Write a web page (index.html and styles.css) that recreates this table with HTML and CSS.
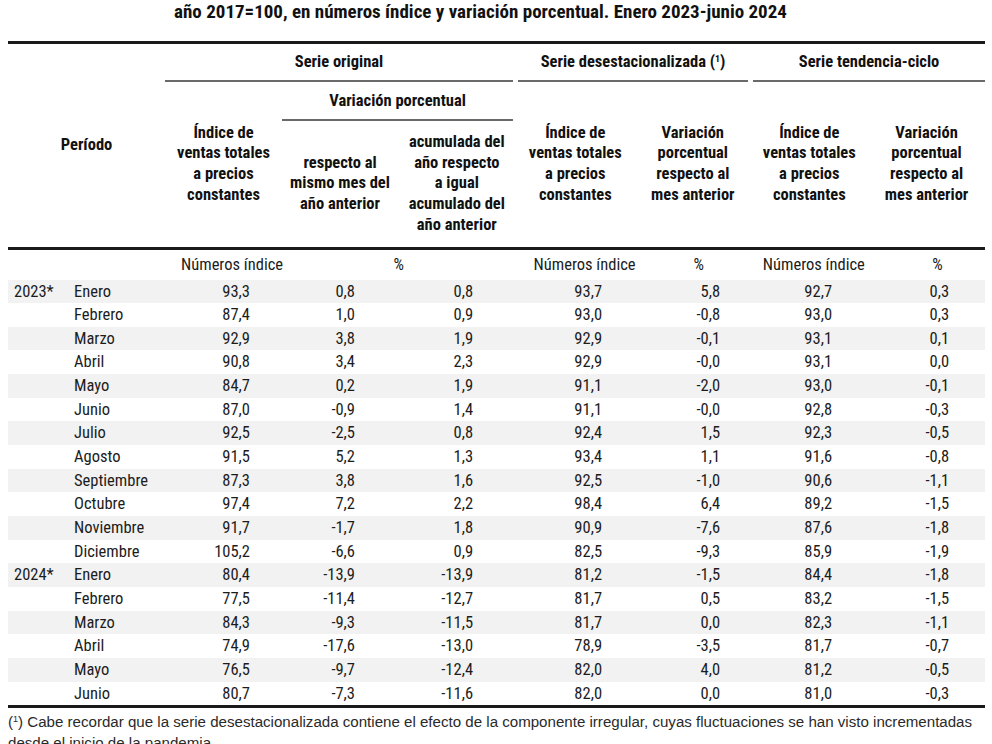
FILE: index.html
```html
<!DOCTYPE html>
<html lang="es">
<head>
<meta charset="utf-8">
<title>Índice de ventas</title>
<link rel="stylesheet" href="styles.css">
</head>
<body>
<div class="page">
  <h1 class="title">año 2017=100, en números índice y variación porcentual. Enero 2023-junio 2024</h1>
  <table class="tbl">
    <colgroup>
      <col class="w-year"><col class="w-month"><col class="w-c3"><col class="w-c4"><col class="w-c5"><col class="w-c6"><col class="w-c7"><col class="w-c8"><col class="w-c9">
    </colgroup>
    <thead>
      <tr class="h1">
        <th colspan="2" rowspan="3" class="periodo">Período</th>
        <th colspan="3" class="grp"><div class="ul ul-r">Serie original</div></th>
        <th colspan="2" class="grp"><div class="ul ul-lr">Serie desestacionalizada (<sup>1</sup>)</div></th>
        <th colspan="2" class="grp"><div class="ul ul-l">Serie tendencia-ciclo</div></th>
      </tr>
      <tr class="h2">
        <th rowspan="2" class="sub">Índice de<br>ventas totales<br>a precios<br>constantes</th>
        <th colspan="2" class="grp"><div class="ul ul-r">Variación porcentual</div></th>
        <th rowspan="2" class="sub">Índice de<br>ventas totales<br>a precios<br>constantes</th>
        <th rowspan="2" class="sub">Variación<br>porcentual<br>respecto al<br>mes anterior</th>
        <th rowspan="2" class="sub">Índice de<br>ventas totales<br>a precios<br>constantes</th>
        <th rowspan="2" class="sub">Variación<br>porcentual<br>respecto al<br>mes anterior</th>
      </tr>
      <tr class="h3">
        <th class="sub">respecto al<br>mismo mes del<br>año anterior</th>
        <th class="sub">acumulada del<br>año respecto<br>a igual<br>acumulado del<br>año anterior</th>
      </tr>
    </thead>
    <tbody>
      <tr class="units">
        <td colspan="2"></td>
        <td class="u3">Números índice</td>
        <td colspan="2" class="u45">%</td>
        <td class="u6">Números índice</td>
        <td class="u7">%</td>
        <td class="u8">Números índice</td>
        <td class="u9">%</td>
      </tr>
      <tr><td class="yr">2023*</td><td class="mo">Enero</td><td class="n3">93,3</td><td class="n4">0,8</td><td class="n5">0,8</td><td class="n6">93,7</td><td class="n7">5,8</td><td class="n8">92,7</td><td class="n9">0,3</td></tr>
      <tr><td class="yr"></td><td class="mo">Febrero</td><td class="n3">87,4</td><td class="n4">1,0</td><td class="n5">0,9</td><td class="n6">93,0</td><td class="n7">-0,8</td><td class="n8">93,0</td><td class="n9">0,3</td></tr>
      <tr><td class="yr"></td><td class="mo">Marzo</td><td class="n3">92,9</td><td class="n4">3,8</td><td class="n5">1,9</td><td class="n6">92,9</td><td class="n7">-0,1</td><td class="n8">93,1</td><td class="n9">0,1</td></tr>
      <tr><td class="yr"></td><td class="mo">Abril</td><td class="n3">90,8</td><td class="n4">3,4</td><td class="n5">2,3</td><td class="n6">92,9</td><td class="n7">-0,0</td><td class="n8">93,1</td><td class="n9">0,0</td></tr>
      <tr><td class="yr"></td><td class="mo">Mayo</td><td class="n3">84,7</td><td class="n4">0,2</td><td class="n5">1,9</td><td class="n6">91,1</td><td class="n7">-2,0</td><td class="n8">93,0</td><td class="n9">-0,1</td></tr>
      <tr><td class="yr"></td><td class="mo">Junio</td><td class="n3">87,0</td><td class="n4">-0,9</td><td class="n5">1,4</td><td class="n6">91,1</td><td class="n7">-0,0</td><td class="n8">92,8</td><td class="n9">-0,3</td></tr>
      <tr><td class="yr"></td><td class="mo">Julio</td><td class="n3">92,5</td><td class="n4">-2,5</td><td class="n5">0,8</td><td class="n6">92,4</td><td class="n7">1,5</td><td class="n8">92,3</td><td class="n9">-0,5</td></tr>
      <tr><td class="yr"></td><td class="mo">Agosto</td><td class="n3">91,5</td><td class="n4">5,2</td><td class="n5">1,3</td><td class="n6">93,4</td><td class="n7">1,1</td><td class="n8">91,6</td><td class="n9">-0,8</td></tr>
      <tr><td class="yr"></td><td class="mo">Septiembre</td><td class="n3">87,3</td><td class="n4">3,8</td><td class="n5">1,6</td><td class="n6">92,5</td><td class="n7">-1,0</td><td class="n8">90,6</td><td class="n9">-1,1</td></tr>
      <tr><td class="yr"></td><td class="mo">Octubre</td><td class="n3">97,4</td><td class="n4">7,2</td><td class="n5">2,2</td><td class="n6">98,4</td><td class="n7">6,4</td><td class="n8">89,2</td><td class="n9">-1,5</td></tr>
      <tr><td class="yr"></td><td class="mo">Noviembre</td><td class="n3">91,7</td><td class="n4">-1,7</td><td class="n5">1,8</td><td class="n6">90,9</td><td class="n7">-7,6</td><td class="n8">87,6</td><td class="n9">-1,8</td></tr>
      <tr><td class="yr"></td><td class="mo">Diciembre</td><td class="n3">105,2</td><td class="n4">-6,6</td><td class="n5">0,9</td><td class="n6">82,5</td><td class="n7">-9,3</td><td class="n8">85,9</td><td class="n9">-1,9</td></tr>
      <tr><td class="yr">2024*</td><td class="mo">Enero</td><td class="n3">80,4</td><td class="n4">-13,9</td><td class="n5">-13,9</td><td class="n6">81,2</td><td class="n7">-1,5</td><td class="n8">84,4</td><td class="n9">-1,8</td></tr>
      <tr><td class="yr"></td><td class="mo">Febrero</td><td class="n3">77,5</td><td class="n4">-11,4</td><td class="n5">-12,7</td><td class="n6">81,7</td><td class="n7">0,5</td><td class="n8">83,2</td><td class="n9">-1,5</td></tr>
      <tr><td class="yr"></td><td class="mo">Marzo</td><td class="n3">84,3</td><td class="n4">-9,3</td><td class="n5">-11,5</td><td class="n6">81,7</td><td class="n7">0,0</td><td class="n8">82,3</td><td class="n9">-1,1</td></tr>
      <tr><td class="yr"></td><td class="mo">Abril</td><td class="n3">74,9</td><td class="n4">-17,6</td><td class="n5">-13,0</td><td class="n6">78,9</td><td class="n7">-3,5</td><td class="n8">81,7</td><td class="n9">-0,7</td></tr>
      <tr><td class="yr"></td><td class="mo">Mayo</td><td class="n3">76,5</td><td class="n4">-9,7</td><td class="n5">-12,4</td><td class="n6">82,0</td><td class="n7">4,0</td><td class="n8">81,2</td><td class="n9">-0,5</td></tr>
      <tr><td class="yr"></td><td class="mo">Junio</td><td class="n3">80,7</td><td class="n4">-7,3</td><td class="n5">-11,6</td><td class="n6">82,0</td><td class="n7">0,0</td><td class="n8">81,0</td><td class="n9">-0,3</td></tr>
    </tbody>
  </table>
  <p class="note">(<sup>1</sup>) Cabe recordar que la serie desestacionalizada contiene el efecto de la componente irregular, cuyas fluctuaciones se han visto incrementadas desde el inicio de la pandemia.</p>
</div>
</body>
</html>
```

FILE: styles.css
```css
html, body {
  margin: 0;
  padding: 0;
  background: #ffffff;
}

.page {
  padding: 0 7px 0 8px;
  font-family: "Roboto", "Liberation Sans", sans-serif;
  font-stretch: condensed;
  color: #161616;
}

.title {
  margin: 0;
  padding: 2px 32px 0 0;
  height: 41px;
  box-sizing: border-box;
  font-size: 19px;
  line-height: 20px;
  font-weight: bold;
  text-align: center;
  color: #111;
}

.tbl {
  width: 977px;
  table-layout: fixed;
  border-collapse: collapse;
  border-top: 3px solid #1a1a1a;
  border-bottom: 3px solid #1a1a1a;
  font-size: 16.5px;
}

.w-year { width: 62px; }
.w-month { width: 95px; }
.w-c3 { width: 117px; }
.w-c4 { width: 116px; }
.w-c5 { width: 117.5px; }
.w-c6 { width: 119.5px; }
.w-c7 { width: 115.5px; }
.w-c8 { width: 117.5px; }
.w-c9 { width: 117px; }

thead th {
  font-weight: bold;
  text-align: center;
  vertical-align: middle;
  padding: 0;
  line-height: 20.8px;
  color: #111;
}

thead tr.h3 th,
thead tr.h2 th.sub {
  border-bottom: 3px solid #1a1a1a;
}

.periodo {
  border-bottom: 3px solid #1a1a1a;
}

.h1 { height: 38px; }
.h2 { height: 39px; }
.h3 { height: 127px; }

.grp {
  vertical-align: bottom;
}

.ul {
  line-height: 36px;
  border-bottom: 2px solid #6a6a6a;
}

.ul-r { margin-right: 2.5px; }
.ul-l { margin-left: 2.5px; }
.ul-lr { margin: 0 2.5px; }

sup {
  font-size: 60%;
  line-height: 0;
  vertical-align: 0.55em;
}

tbody td {
  padding: 0;
  line-height: 23.65px;
  height: 23.65px;
  white-space: nowrap;
  color: #1c1c1c;
}

tbody tr:nth-child(even) {
  background: #f2f2f2;
}

tr.units td {
  line-height: 30px;
  height: 30px;
  text-align: center;
}

.u3 { text-align: left; padding-left: 16px; }
.u45 { text-align: center; }
.u6 { text-align: left; padding-left: 18px; }
.u7 { text-align: center; padding-left: 12px; }
.u8 { text-align: left; padding-left: 9px; }
.u9 { text-align: center; padding-left: 22px; }

.yr { padding-left: 6px; }
.mo { padding-left: 4px; }

.n3, .n4, .n5, .n6, .n7, .n8, .n9 { text-align: right; }
.n3 { padding-right: 32px; }
.n4 { padding-right: 43px; }
.n5 { padding-right: 42.5px; }
.n6 { padding-right: 33px; }
.n7 { padding-right: 30.5px; }
.n8 { padding-right: 36px; }
.n9 { padding-right: 36px; }

.note {
  margin: 3px 0 0 0;
  font-family: "Liberation Sans", Arial, sans-serif;
  font-stretch: normal;
  font-size: 15.1px;
  line-height: 21px;
  color: #2a2a2a;
}
```
